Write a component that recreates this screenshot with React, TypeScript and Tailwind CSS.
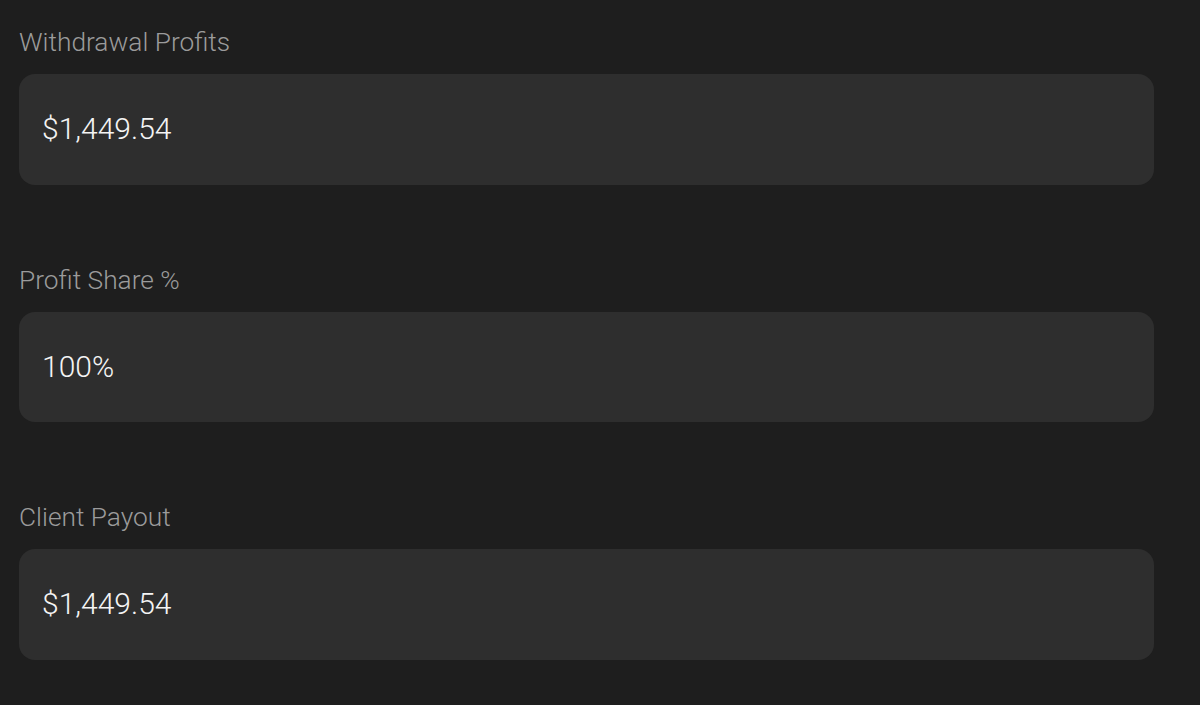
const fields = [
  { label: "Withdrawal Profits", value: "$1,449.54" },
  { label: "Profit Share %", value: "100%" },
  { label: "Client Payout", value: "$1,449.54" },
];

export default function App() {
  return (
    <div className="min-h-[705px] w-full bg-[#1e1e1e] pl-[19px] pr-[46px] pt-[27px] font-['Roboto',sans-serif]">
      <div className="flex flex-col gap-[80px]">
        {fields.map((f) => (
          <div key={f.label} className="flex flex-col gap-[17px]">
            <label className="text-[26.3px] font-light leading-[30px] text-[#9b9b9b]">{f.label}</label>
            <div className="flex h-[110.5px] items-center rounded-[16px] bg-[#2e2e2e] px-[23px]">
              <span className="text-[30px] font-light leading-none text-[#f4f4f4]">{f.value}</span>
            </div>
          </div>
        ))}
      </div>
    </div>
  );
}
